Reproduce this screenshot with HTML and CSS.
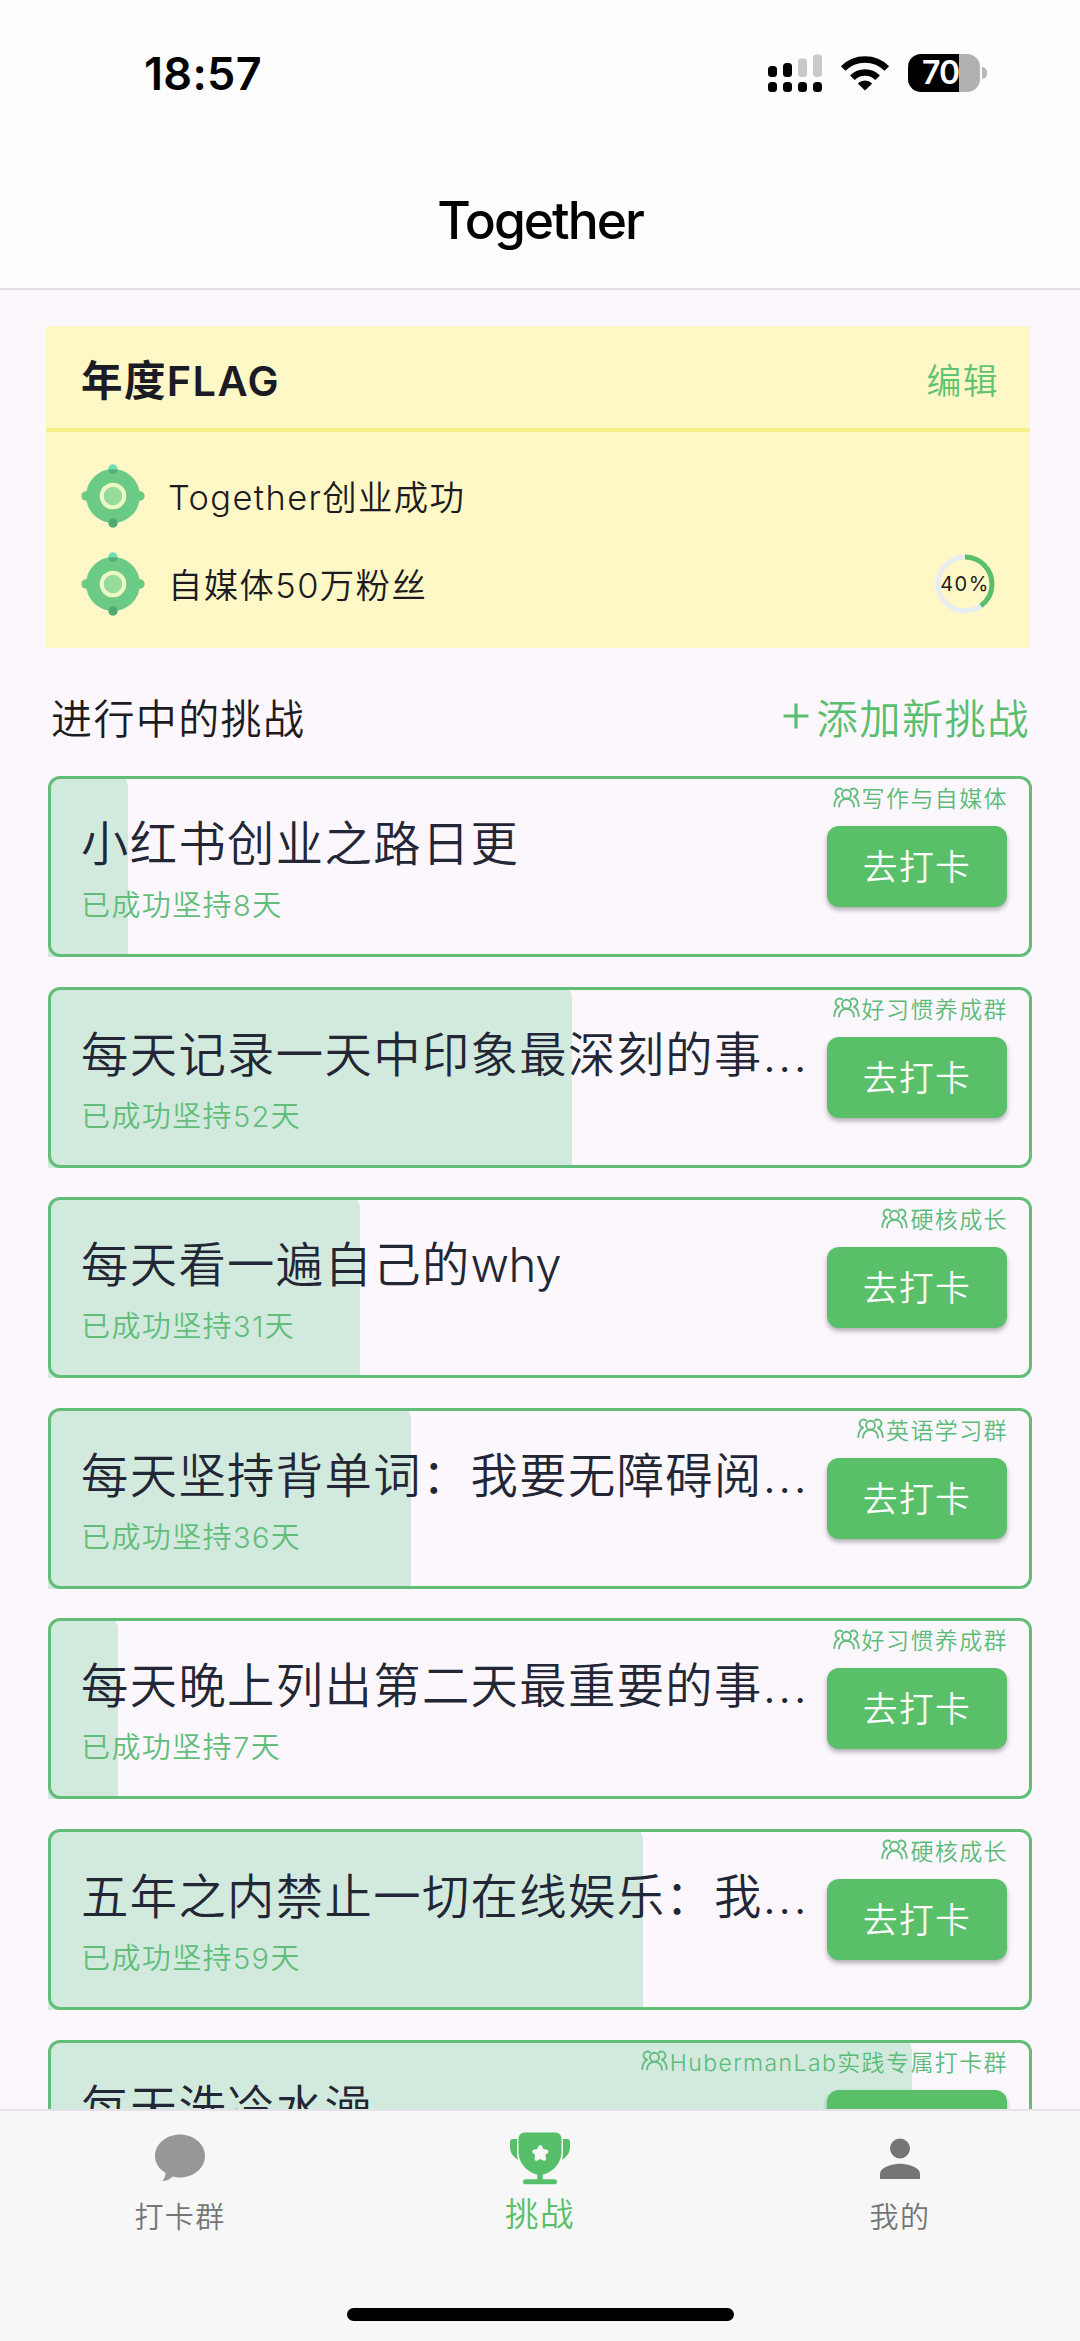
FILE: index.html
```html
<!DOCTYPE html>
<html lang="zh-CN">
<head>
<meta charset="utf-8">
<title>Together</title>
<link rel="stylesheet" href="styles.css">
</head>
<body>
<svg class="defs" width="0" height="0" aria-hidden="true">
  <symbol id="group" viewBox="0 0 28 22">
    <g fill="none" stroke="#60bd7d" stroke-width="2" stroke-linecap="round">
      <circle cx="14" cy="7.600" r="4.700"/>
      <path d="M6.200 20.500c0-5 3.400-8.200 7.800-8.200s7.800 3.200 7.800 8.200"/>
      <path d="M9.300 2.500a4.200 4.200 0 1 0-2.600 7.500C3.500 11.200 1.300 14.500 1.200 20"/>
      <path d="M18.700 2.500a4.200 4.200 0 1 1 2.600 7.500c3.200 1.200 5.400 4.500 5.500 10"/>
    </g>
  </symbol>
  <symbol id="medal" viewBox="0 0 64 64">
    <circle cx="32" cy="5" r="4.700" fill="#6fdcb4"/>
    <circle cx="5" cy="32" r="4.700" fill="#6aca86"/>
    <circle cx="59" cy="32" r="4.700" fill="#6aca86"/>
    <circle cx="32" cy="32" r="27" fill="#6aca86"/>
    <path d="M27.400 6a27 27 0 0 1 9.200 0a4.700 4.700 0 0 1-9.200 0z" fill="#4fae79"/>
    <circle cx="32" cy="59" r="4.700" fill="#4eac72"/>
    <circle cx="32" cy="32" r="11.300" fill="#98dc9b" stroke="#eef8c4" stroke-width="4"/>
  </symbol>
</svg>

<header class="header">
  <div class="status">
    <span class="time">18:57</span>
    <div class="indicators">
      <svg width="54" height="38" viewBox="0 0 54 38">
        <rect x="0" y="12" width="9" height="11" rx="3.500"/><rect x="15" y="9" width="9" height="14" rx="3.500"/>
        <rect x="30" y="4.500" width="9" height="18.500" rx="3.500" fill="#c9c9c9"/><rect x="45" y="0.500" width="9" height="22.500" rx="3.500" fill="#c9c9c9"/>
        <rect x="0" y="28" width="9" height="10" rx="3.500"/><rect x="15" y="28" width="9" height="10" rx="3.500"/><rect x="30" y="28" width="9" height="10" rx="3.500"/><rect x="45" y="28" width="9" height="10" rx="3.500"/>
      </svg>
      <svg class="wifi" width="50" height="38" viewBox="0 0 50 38">
        <path d="M25 36.500 17.800 29.500a10 10 0 0 1 14.400 0z"/>
        <path d="M12.400 23.800a17.800 17.800 0 0 1 25.200 0" fill="none" stroke="#000" stroke-width="6.500"/>
        <path d="M3.200 14.500a31 31 0 0 1 43.600 0" fill="none" stroke="#000" stroke-width="6.500"/>
      </svg>
      <div class="battery"><span>70</span></div><i class="nub"></i>
    </div>
  </div>
  <h1>Together</h1>
</header>

<main class="content">
  <section class="flag">
    <div class="flag-head"><h2>年度FLAG</h2><a>编辑</a></div>
    <div class="flag-list">
      <div class="goal"><svg class="medal"><use href="#medal"/></svg><span>Together创业成功</span></div>
      <div class="goal"><svg class="medal"><use href="#medal"/></svg><span>自媒体50万粉丝</span>
        <div class="ring">
          <svg width="60" height="60" viewBox="0 0 60 60" fill="none" stroke-width="5">
            <circle cx="30" cy="30" r="27" stroke="#e7edf2"/>
            <circle cx="30" cy="30" r="27" stroke="#59bf68" pathLength="100" stroke-dasharray="40 60" transform="rotate(-90 30 30)"/>
          </svg><b>40%</b>
        </div>
      </div>
    </div>
  </section>

  <div class="section-head"><h3>进行中的挑战</h3><a><svg width="26" height="26" viewBox="0 0 26 26"><path d="M13 0.500v25M0.500 13h25" stroke="#59bf6f" stroke-width="3.200"/></svg>添加新挑战</a></div>

  <section class="challenges">
    <article class="card"><i class="fill" style="width:80px"></i>
      <div class="info"><h4>小红书创业之路日更</h4><p>已成功坚持8天</p></div>
      <div class="side"><span class="tag"><svg><use href="#group"/></svg>写作与自媒体</span><button>去打卡</button></div></article>
    <article class="card"><i class="fill" style="width:524px"></i>
      <div class="info"><h4>每天记录一天中印象最深刻的事<em>...</em></h4><p>已成功坚持52天</p></div>
      <div class="side"><span class="tag"><svg><use href="#group"/></svg>好习惯养成群</span><button>去打卡</button></div></article>
    <article class="card"><i class="fill" style="width:312px"></i>
      <div class="info"><h4>每天看一遍自己的<span class="latin">why</span></h4><p>已成功坚持31天</p></div>
      <div class="side"><span class="tag"><svg><use href="#group"/></svg>硬核成长</span><button>去打卡</button></div></article>
    <article class="card"><i class="fill" style="width:363px"></i>
      <div class="info"><h4>每天坚持背单词：我要无障碍阅<em>...</em></h4><p>已成功坚持36天</p></div>
      <div class="side"><span class="tag"><svg><use href="#group"/></svg>英语学习群</span><button>去打卡</button></div></article>
    <article class="card"><i class="fill" style="width:70px"></i>
      <div class="info"><h4>每天晚上列出第二天最重要的事<em>...</em></h4><p>已成功坚持7天</p></div>
      <div class="side"><span class="tag"><svg><use href="#group"/></svg>好习惯养成群</span><button>去打卡</button></div></article>
    <article class="card"><i class="fill" style="width:595px"></i>
      <div class="info"><h4>五年之内禁止一切在线娱乐：我<em>...</em></h4><p>已成功坚持59天</p></div>
      <div class="side"><span class="tag"><svg><use href="#group"/></svg>硬核成长</span><button>去打卡</button></div></article>
    <article class="card"><i class="fill" style="width:864px"></i>
      <div class="info"><h4>每天洗冷水澡</h4></div>
      <div class="side"><span class="tag"><svg><use href="#group"/></svg>HubermanLab实践专属打卡群</span><button>去打卡</button></div></article>
  </section>
</main>

<nav class="tabs">
  <div class="tab-row">
    <a class="tab"><svg width="60" height="60" viewBox="0 0 60 60"><path fill="#979797" d="M30 6.500c13.800 0 25 9.600 25 21.500S43.800 49.500 30 49.500c-2.600 0-5-.3-7.300-.9-2.700 2.600-6.500 4.700-10.200 4.400 2-2.300 3.200-5.300 3-8.200C9 41 5 34.900 5 28 5 16.100 16.200 6.500 30 6.500z"/></svg><span>打卡群</span></a>
    <a class="tab active"><svg width="60" height="60" viewBox="0 0 60 60" fill="#57bf69"><path d="M14.500 4.500h31a6 6 0 0 1 6 6v13c0 12-9 21-18.700 23v4.700h11.700a2.500 2.500 0 0 1 0 5h-29a2.500 2.500 0 0 1 0-5h11.700v-4.700C17.500 44.500 8.500 35.500 8.500 23.500v-13a6 6 0 0 1 6-6z"/><path d="M7 11v14q.2 4 1 7Q0 27 0 19v-5q0-3 3-3zM53 11v14q-.2 4-1 7 8-5 8-13v-5q0-3-3-3z"/><path fill="#f7f7f7" stroke="#f7f7f7" stroke-width="4" stroke-linejoin="round" d="M30.300 19l1.800 4 4.300.5-3.200 3 .9 4.300-3.800-2-3.800 2 .9-4.300-3.200-3 4.300-.5z"/></svg><span>挑战</span></a>
    <a class="tab"><svg width="60" height="60" viewBox="0 0 60 60" fill="#757575"><circle cx="30" cy="20.500" r="10"/><path d="M10 51v-5c0-6.700 12-10.300 20-10.300S50 39.300 50 46v5z"/></svg><span>我的</span></a>
  </div>
  <i class="home"></i>
</nav>
</body>
</html>
```
FILE: styles.css
```css
* { box-sizing: border-box; margin: 0; padding: 0; }
body {
  width: 1080px; height: 2341px; overflow: hidden;
  display: flex; flex-direction: column;
  background: #fbf7fd; color: #1d1b20;
  font-family: Inter, "Noto Sans CJK SC", sans-serif;
  font-weight: 350; letter-spacing: 1.4px; white-space: nowrap;
}
i, em { font-style: normal; }
svg { display: block; flex: none; }
.defs { position: absolute; }

.header { flex: none; height: 290px; background: #fdfdfd; border-bottom: 2px solid #e3e0e5; color: #000; }
.status { height: 146px; padding: 0 93px 0 144px; display: flex; justify-content: space-between; align-items: center; }
.time { font-size: 45px; font-weight: 600; letter-spacing: 0.300px; line-height: 50px; padding-top: 1px; }
.indicators { display: flex; align-items: center; height: 38px; }
.wifi { margin: 0 18px 0 18px; }
.battery {
  width: 72px; height: 38px; border-radius: 13px; color: #fff;
  background: linear-gradient(90deg, #000 0 51px, #b1b1b1 51px);
  font-size: 32px; font-weight: 600; line-height: 38px; letter-spacing: -1px; padding-left: 14px;
}
.nub { width: 5px; height: 12px; margin-left: 2px; background: #b8b8b8; border-radius: 0 5px 5px 0; }
h1 { font-size: 51.500px; font-weight: 500; letter-spacing: -2px; line-height: 64px; text-align: center; margin-top: 42px; }

.content { height: 1819px; overflow: hidden; padding: 36px 48px 0; }
.flag { width: 984px; height: 322px; margin-left: -2px; background: #fef8c6; }
.flag-head { height: 106px; border-bottom: 4px solid #f8ee87; padding: 8px 31px 0 35px; display: flex; justify-content: space-between; align-items: center; }
h2 { font-size: 41.500px; font-weight: 600; line-height: 60px; color: #1b1b25; }
.flag-head a { font-size: 34.800px; color: #5fc274; line-height: 60px; }
.flag-list { padding: 20px 35px 0; }
.goal { height: 88px; display: flex; align-items: center; font-size: 34.400px; }
.goal span { margin-top: -2px; }
.medal { width: 64px; height: 64px; margin-right: 23px; }
.ring { margin-left: auto; width: 60px; height: 60px; display: grid; place-items: center; }
.ring > * { grid-area: 1 / 1; }
.ring b { font-size: 20px; font-weight: 400; }

.section-head { height: 128px; padding: 8px 2px 0 3px; display: flex; justify-content: space-between; align-items: center; }
h3 { font-size: 41px; font-weight: 350; }
.section-head a { display: flex; align-items: center; gap: 8px; font-size: 41.300px; color: #59bf6f; }

.challenges { display: flex; flex-direction: column; gap: 29.600px; }
.card {
  position: relative; flex: none; width: 984px; height: 181px;
  border: 3px solid #62bd78; border-radius: 12px;
  display: flex; justify-content: space-between;
}
.fill { position: absolute; left: -3px; top: -3px; bottom: -3px; z-index: -1; background: #d2eade; border-radius: 12px 10px 0 0; }
.info { padding: 35px 0 0 30px; }
h4 { font-size: 47.300px; font-weight: 350; line-height: 60px; color: #232634; }
h4 em { letter-spacing: 2px; }
.latin { letter-spacing: -0.500px; }
.info p { font-size: 29px; line-height: 40px; margin-top: 12px; color: #62bd7a; }
.side { width: 0; margin-right: 21px; display: flex; flex-direction: column; align-items: flex-end; }
.tag { display: flex; align-items: center; gap: 2px; font-size: 23px; height: 36px; color: #5bbb79; }
.tag svg { width: 27px; height: 21px; }
button {
  width: 180px; height: 81px; margin: 11px 1px 0 0; border: 0; border-radius: 12px; padding-bottom: 3px;
  background: #59bf69; color: #fdfdfd; font: inherit; font-size: 34.800px; letter-spacing: 1.400px;
  box-shadow: 0 3px 5px rgba(0,0,0,.3);
}

.tabs { flex: none; height: 232px; background: #f7f7f7; border-top: 2px solid #e4e2e6; }
.tab-row { height: 197px; display: flex; }
.tab { flex: 1; display: flex; flex-direction: column; align-items: center; padding-top: 17px; font-size: 29px; color: #757575; }
.tab span { line-height: 40px; margin-top: 10px; }
.tab.active { color: #57bf69; font-size: 33.500px; }
.tab.active span { margin-top: 6px; }
.home { display: block; width: 387px; height: 13px; margin: 0 auto; border-radius: 7px; background: #000; }
```
